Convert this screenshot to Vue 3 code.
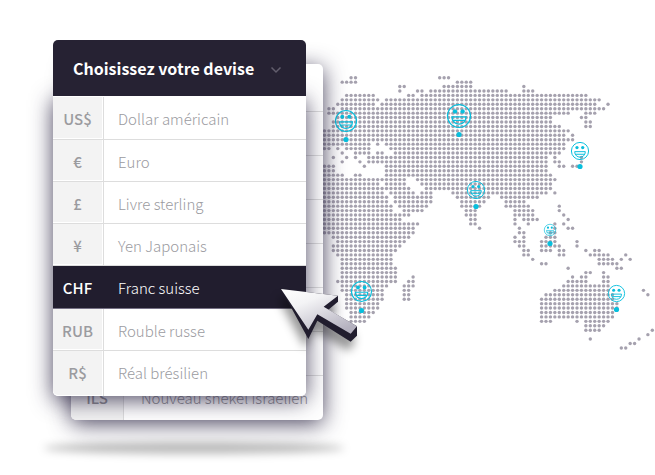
<script setup>
import { ref } from 'vue'

const currencies = [
  { code: 'US$', name: 'Dollar américain' },
  { code: '€', name: 'Euro' },
  { code: '£', name: 'Livre sterling' },
  { code: '¥', name: 'Yen Japonais' },
  { code: 'CHF', name: 'Franc suisse' },
  { code: 'RUB', name: 'Rouble russe' },
  { code: 'R$', name: 'Réal brésilien' },
]
const selected = ref('CHF')

// One string per latitude row; each entry is a column or a range of columns.
const land = [
  '6-7 26-28',
  '4-7 30-33',
  '17-18 27-33 45',
  '17 21-22 24-41 45-47',
  '5-11 19-20 22-59',
  '4-12 14-62',
  '3-11 13-61 64',
  '1-2 4-63',
  '1-55 59-61',
  '3-51 58-59',
  '2-51 59-60',
  '2-53 59-60',
  '0-55',
  '0-54 56',
  '0-56',
  '0-10 12 14-54',
  '0-1 3 5-10 15-54',
  '4 7-10 12-13 16-53',
  '2 5 7 10-50 52 58',
  '4 8 10-50 52-53 58',
  '0-2 9 14-50 53-54 56-57',
  '0-2 14-50',
  '0-4 7-8 14-51',
  '0-18 21-52',
  '0-12 14-18 22-51',
  '0-19 23-51',
  '0-13 15-20 22-24 29-50 52',
  '0-14 16-24 30-37 40-48',
  '0-14 16-24 31-36 41-45',
  '0-15 17-23 31-35 41-46 53',
  '0-15 18-22 32-34 43-47 53',
  '0-19 32-34 43-47 54',
  '0-17 33-34 43 45-48 55',
  '0-21 33-34 43 46 52 54',
  '0-20 35 44 52 55-56',
  '0-20 44-45 51-52',
  '2-19 43 45 50-52',
  '3-18 43-45 49-52 57',
  '2-17 44-45 49-53 57',
  '2-16 45-46 49-51 53-54 59 61-62',
  '3-15 45-46 53-54 60-64 68',
  '4-15 47 62-65 67 69',
  '4-15 49-50 62-66',
  '4-16 55 66-67',
  '4-16 59-60 63',
  '4-16 20 56 58-59 63-64',
  '3-16 19-20 55-59 63-64',
  '4-14 18-20 54-64',
  '4-13 18-19 52-64 72',
  '5-13 18-19 50-65 73',
  '5-13 18-19 49-65',
  '5-12 49-66',
  '5-12 49-66',
  '6-11 49-65',
  '6-10 49-65',
  '6-9 49-51 57 59-64',
  '59-63',
  '59-62 74',
  '73',
  '60 71',
  '69-70',
  '67-68',
]
const pitch = 4.43
const dots = land.flatMap((row, r) =>
  row.split(' ').flatMap((part) => {
    const [from, to = from] = part.split('-').map(Number)
    return Array.from({ length: to - from + 1 }, (_, i) => ({
      x: 324.5 + (from + i) * pitch,
      y: 77.7 + r * pitch,
    }))
  })
)

const pins = [
  { x: 346, y: 121, r: 11, dot: 18.5 },
  { x: 459, y: 116, r: 12, dot: 18.5 },
  { x: 476, y: 190, r: 9, dot: 16.5 },
  { x: 580, y: 151, r: 9, dot: 15.5 },
  { x: 550, y: 230, r: 6, dot: 13.5 },
  { x: 361.5, y: 291.5, r: 10.5, dot: 19 },
  { x: 616.5, y: 293.5, r: 8.5, dot: 16 },
]
</script>

<template>
  <main class="scene">
    <section class="stack">
      <ul class="back" aria-hidden="true">
        <li v-for="n in 7" :key="n"></li>
        <li class="last"><b>ILS</b><span>Nouveau shekel israélien</span></li>
      </ul>
      <div class="picker">
        <button class="head" type="button">
          Choisissez votre devise
          <svg class="chevron" viewBox="0 0 12 8" aria-hidden="true">
            <path d="M1.500 1.500 6 6l4.500-4.500" />
          </svg>
        </button>
        <ul class="list">
          <li v-for="c in currencies" :key="c.code">
            <button
              type="button"
              class="option"
              :class="{ active: selected === c.code }"
              @click="selected = c.code"
            >
              <b>{{ c.code }}</b>
              <span>{{ c.name }}</span>
            </button>
          </li>
        </ul>
      </div>
      <div class="ground"></div>
    </section>

    <svg class="map" viewBox="323 70 332 285" aria-hidden="true">
      <circle v-for="(d, i) in dots" :key="i" :cx="d.x" :cy="d.y" r="1.7" fill="#a5a1ae" />
      <g v-for="(p, i) in pins" :key="'p' + i">
        <g :transform="`translate(${p.x} ${p.y}) scale(${p.r / 11})`" class="face">
          <circle r="10.5" />
          <path d="M-6.500 0.800H6.500C6.500 9.700 -6.500 9.700 -6.500 0.800ZM-5.500 4H5.500" />
          <circle class="eye" cx="-3.700" cy="-4.200" r="2" />
          <circle class="eye" cx="3.300" cy="-4.200" r="2" />
        </g>
        <circle :cx="p.x" :cy="p.y + p.dot" r="2.600" fill="#08bfdd" />
      </g>
    </svg>

    <svg class="cursor" viewBox="750 141 240 171" aria-hidden="true">
      <defs>
        <linearGradient id="metal" x1="0" y1="0" x2="0.700" y2="1">
          <stop offset="0" stop-color="#fff" />
          <stop offset="0.350" stop-color="#f3f3f5" />
          <stop offset="1" stop-color="#b4b1bf" />
        </linearGradient>
      </defs>
      <path fill="#211d2e" d="M753 147 835 297 862 242 962 305 981 287V259L895 209 924 185V167Z" />
      <path fill="url(#metal)" d="M753 147 924 167 881 200 981 259 962 281 862 223 835 269Z" />
    </svg>
  </main>
</template>

<style>
body {
  margin: 0;
  background: #fff;
}
</style>

<style scoped>
.scene {
  position: relative;
  display: grid;
  grid-template-columns: 323px 1fr;
  align-items: start;
  overflow: hidden;
  font-family: "Noto Sans CJK SC", "Noto Sans", sans-serif;
  font-size: 15px;
}
ul {
  list-style: none;
  margin: 0;
  padding: 0;
}
b {
  font-weight: 500;
}
.stack {
  position: relative;
  z-index: 1;
  padding: 40px 17px 20px 53px;
}
.map {
  display: block;
  width: 100%;
  margin-top: 70px;
}
.face {
  fill: none;
  stroke: #08bfdd;
  stroke-width: 1.2;
}
.eye {
  fill: #08bfdd;
  stroke: none;
}
.back {
  position: absolute;
  top: 64px;
  left: 71px;
  right: 0;
  border-radius: 5px;
  overflow: hidden;
  background: #fff;
  box-shadow: 0 4px 22px rgba(38, 31, 62, 0.8);
}
.back li {
  box-sizing: border-box;
  height: 44px;
  border-bottom: 1px solid #ddd;
}
.back li:first-child {
  height: 48px;
}
.back .last {
  display: grid;
  grid-template-columns: 53px 1fr;
  border: 0;
  line-height: 44px;
  color: #8f8e94;
}
.back .last b {
  background: #f3f3f3;
  border-right: 1px solid #ddd;
  text-align: center;
}
.back .last span {
  padding-left: 17px;
  font-weight: 300;
  white-space: nowrap;
}
.picker {
  position: relative;
}
button {
  display: flex;
  width: 100%;
  align-items: center;
  margin: 0;
  padding: 0;
  border: 0;
  font: inherit;
  text-align: left;
  cursor: pointer;
}
.head {
  position: relative;
  z-index: 1;
  height: 56px;
  padding: 0 24px 0 20px;
  justify-content: space-between;
  border-radius: 5px 5px 0 0;
  background: #262233;
  color: #fff;
  font-size: 16px;
  font-weight: 700;
}
.chevron {
  width: 12px;
  height: 8px;
  margin-top: 4px;
  fill: none;
  stroke: #625e6d;
  stroke-width: 1.5;
}
.list {
  padding-top: 1px;
  border-radius: 0 0 5px 5px;
  background: #fff;
  box-shadow: 0 4px 22px rgba(38, 31, 62, 0.8);
}
.option {
  box-sizing: border-box;
  height: 42px;
  align-items: stretch;
  border-bottom: 1px solid #ddd;
  background: #fff;
  color: #9b9b9f;
  line-height: 44px;
}
.option b {
  width: 49px;
  margin-bottom: 1px;
  background: #f3f3f3;
  text-align: center;
}
.option span {
  flex: 1;
  margin-left: 1px;
  padding-left: 14px;
  border-left: 1px solid #ddd;
  font-weight: 300;
}
li:first-child .option,
.option.active {
  height: 43px;
}
.option.active {
  background: #211d2e;
  border-color: #767185;
  color: #fff;
}
.option.active b {
  background: none;
}
.option.active span {
  border-color: transparent;
}
li:last-child .option {
  height: 45px;
  border: 0;
  border-radius: 0 0 5px 5px;
}
li:last-child b {
  border-radius: 0 0 0 5px;
}
.ground {
  width: 300px;
  height: 12px;
  margin: 46px 0 0 -9px;
  border-radius: 50%;
  background: rgba(0, 0, 0, 0.26);
  filter: blur(4px);
}
.cursor {
  position: absolute;
  z-index: 2;
  left: 280px;
  top: 287px;
  width: 80px;
  height: 57px;
  filter: drop-shadow(-3px 9px 5px rgba(0, 0, 0, 0.4));
}
</style>
